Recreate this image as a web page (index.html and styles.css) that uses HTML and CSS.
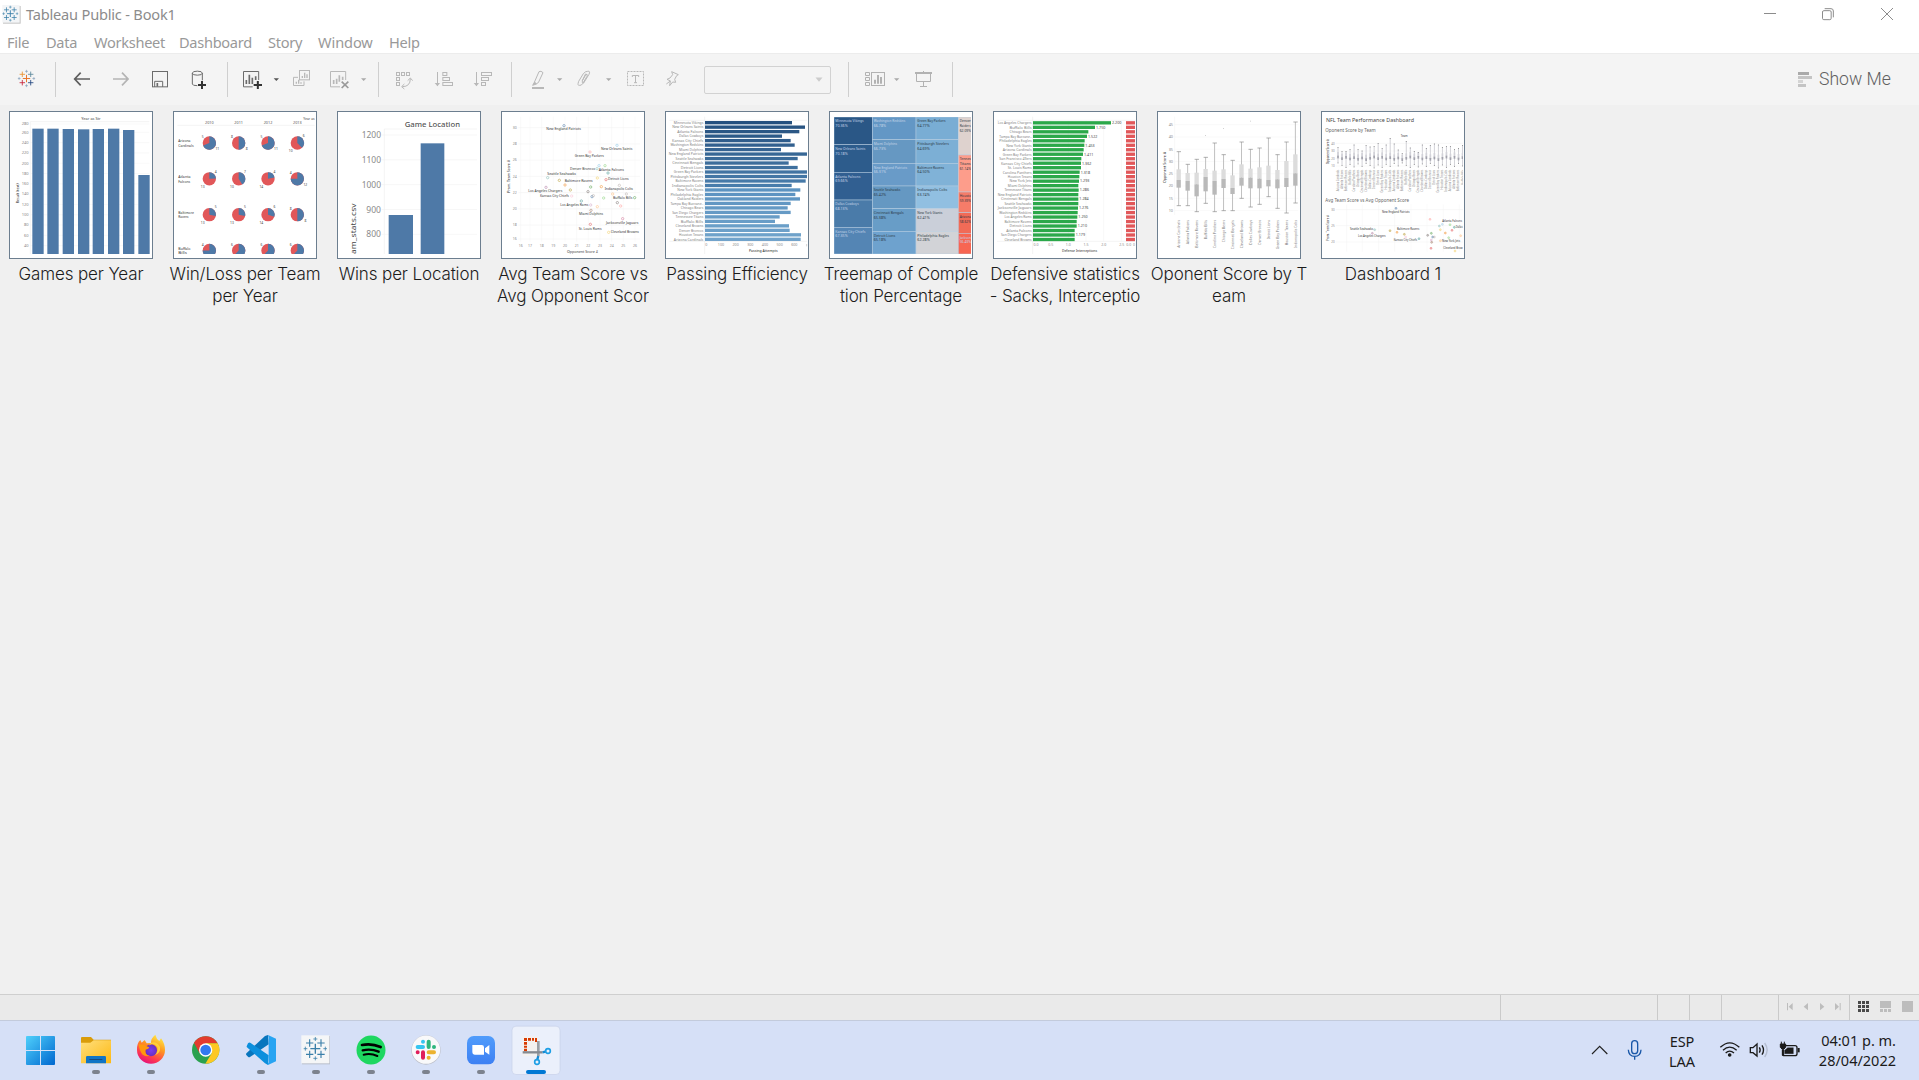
FILE: index.html
```html
<!DOCTYPE html>
<html lang="en">
<head>
<meta charset="utf-8">
<title>Tableau Public - Book1</title>
<link rel="stylesheet" href="styles.css">
</head>
<body>
<svg class="defs" width="0" height="0">
  <defs>
    <g id="marks">
      <path d="M-15 0H15M0-15V15" stroke-width="4" class="m0"/>
      <path d="M-28-17H-6M-17-28V-6" stroke-width="3.4" class="m1"/>
      <path d="M28-17H6M17-28V-6" stroke-width="3.4" class="m2"/>
      <path d="M-28 17H-6M-17 28V6" stroke-width="3.4" class="m3"/>
      <path d="M28 17H6M17 28V6" stroke-width="3.4" class="m4"/>
      <path d="M-6-29H6M0-35V-23M-6 29H6M0 35V23M-35 0H-24M-30-6V6M35 0H24M30-6V6" stroke-width="2.4" class="m5"/>
    </g>
    <linearGradient id="gWin" x1="0" y1="0" x2="1" y2="1"><stop offset="0" stop-color="#4fd0fb"/><stop offset="1" stop-color="#0067cf"/></linearGradient>
    <linearGradient id="gFold" x1="0" y1="0" x2="1" y2="1"><stop offset="0" stop-color="#ffdf7d"/><stop offset="1" stop-color="#fdb913"/></linearGradient>
    <linearGradient id="gFox" x1=".8" y1="0" x2=".3" y2="1"><stop offset="0" stop-color="#fff04a"/><stop offset=".4" stop-color="#ff9a1f"/><stop offset=".75" stop-color="#ff3b4f"/><stop offset="1" stop-color="#e4107c"/></linearGradient>
    <linearGradient id="gZoom" x1="0" y1="0" x2="0" y2="1"><stop offset="0" stop-color="#509cfb"/><stop offset="1" stop-color="#3d80f3"/></linearGradient>
    <radialGradient id="gPurple"><stop offset="0" stop-color="#7b3df0"/><stop offset="1" stop-color="#6a2fc0"/></radialGradient>
  </defs>
</svg>
<div class="window">
  <header class="titlebar">
    <svg class="app-icon" width="22" height="28" viewBox="3 0 66 84"><rect x="9" y="18" width="53" height="53" fill="#c4c4c4"/><rect x="7" y="15" width="52" height="53" fill="#f3f5f7"/><use href="#marks" class="blue" transform="translate(31 41) scale(.68)"/></svg>
    <span class="title">Tableau Public - Book1</span>
    <svg class="caption-buttons" width="169" height="28" viewBox="810 0 507 84" fill="none" stroke="#8c8c8c" stroke-width="3"><path d="M852 40.500H888"/><rect x="1027.500" y="32" width="26" height="27" rx="4"/><path d="M1034 26H1053Q1060 26 1060 33V52"/><path d="M1203 24L1239 60M1239 24L1203 60"/></svg>
  </header>
  <nav class="menubar">
    <span class="file">File</span><span class="data">Data</span><span class="worksheet">Worksheet</span><span class="dashboard">Dashboard</span><span class="story">Story</span><span class="windowm">Window</span><span>Help</span>
  </nav>
  <div class="toolbar">
    <svg width="19" height="51" viewBox="51 162 57 153" class="multi"><use href="#marks" transform="translate(79.500 235.500) scale(.74)"/></svg>
    <i class="sep"></i>
    <svg width="17" height="51" viewBox="219 162 51 153" fill="none" stroke="#5e5e5e" stroke-width="5"><path d="M270 237H225M242 218L224 237L242 256"/></svg>
    <svg width="17" height="51" viewBox="336 162 51 153" fill="none" stroke="#b4b4b4" stroke-width="5"><path d="M339 237H384M366 218L384 237L366 256"/></svg>
    <svg width="18" height="51" viewBox="453 162 54 153" fill="none" stroke="#6c6c6c" stroke-width="3"><rect x="457.500" y="214.500" width="45" height="46"/><path d="M464 261V244H488V261"/><path d="M472 249V260" stroke-width="5"/></svg>
    <svg width="17" height="51" viewBox="573 162 51 153" fill="none" stroke="#6c6c6c" stroke-width="3"><ellipse cx="592" cy="219.500" rx="15" ry="6"/><path d="M577 219V252Q577 257 592 257M607 219V241"/><path d="M594 255H618M606 243V267" stroke="#333" stroke-width="6"/></svg>
    <i class="sep"></i>
    <svg width="21" height="51" viewBox="726 162 63 153" fill="none" stroke="#6c6c6c" stroke-width="3"><path d="M776 240V214.500H730.500V260.500H758"/><path d="M739 252V240M748 252V224M757 252V233M767 240V229" stroke-width="5"/><path d="M761 255H786M773.500 243V267" stroke="#333" stroke-width="6"/></svg>
    <svg width="7" height="51" viewBox="819 162 21 153" fill="#555"><path d="M821 235H837L829 243Z"/></svg>
    <svg width="19" height="51" viewBox="876 162 57 153" fill="none" stroke="#b8b8b8" stroke-width="3"><path d="M894 232H880.500V256.500H912V244"/><rect x="898.500" y="211.500" width="30" height="28"/><path d="M889 251V245M896 251V239M903 251V247M907 234V228M914 234V218M921 234V223" stroke-width="4"/></svg>
    <svg width="20" height="51" viewBox="987 162 60 153" fill="none" stroke="#b8b8b8" stroke-width="3"><path d="M1037 240V214.500H991.500V260.500H1020"/><path d="M1001 252V240M1010 252V236M1018 245V226M1028 240V230" stroke-width="5"/><path d="M1025 245L1045 264M1045 245L1025 264" stroke="#999" stroke-width="5"/></svg>
    <svg width="7" height="51" viewBox="1080 162 21 153" fill="#aaa"><path d="M1083 235H1099L1091 243Z"/></svg>
    <i class="sep"></i>
    <svg width="18" height="51" viewBox="1185 162 54 153" fill="none" stroke="#b8b8b8" stroke-width="3"><rect x="1189.500" y="217.500" width="9" height="9"/><rect x="1204.500" y="217.500" width="9" height="9"/><rect x="1219.500" y="217.500" width="9" height="9"/><rect x="1189.500" y="232.500" width="9" height="9"/><rect x="1189.500" y="247.500" width="9" height="9"/><path d="M1207 260Q1231 260 1231 236M1223 242L1231 234L1238 242M1213 252L1205 260L1213 267"/></svg>
    <svg width="20" height="51" viewBox="1302 162 60 153" fill="none" stroke="#b8b8b8" stroke-width="3"><path d="M1312.500 216V257"/><path d="M1304 249H1320L1312.500 259Z" fill="#b8b8b8" stroke="none"/><rect x="1328.500" y="217.500" width="12" height="9"/><rect x="1328.500" y="232.500" width="20" height="9"/><rect x="1328.500" y="247.500" width="29" height="9"/></svg>
    <svg width="20" height="51" viewBox="1419 162 60 153" fill="none" stroke="#b8b8b8" stroke-width="3"><path d="M1429.500 216V257"/><path d="M1421 249H1437L1429.500 259Z" fill="#b8b8b8" stroke="none"/><rect x="1444.500" y="217.500" width="30" height="9"/><rect x="1444.500" y="232.500" width="21" height="9"/><rect x="1444.500" y="247.500" width="12" height="9"/></svg>
    <i class="sep"></i>
    <svg width="14" height="51" viewBox="93 12 42 153" fill="none" stroke="#b8b8b8" stroke-width="3"><path d="M117 65Q123 61 129 68L115 98Q110 104 103 97Z"/><path d="M103 97L98 106L109 102Z" fill="#b8b8b8"/><path d="M96 114H132" stroke-width="6"/></svg>
    <svg width="7" height="51" viewBox="168 12 21 153" fill="#aaa"><path d="M171 85H187L179 93Z"/></svg>
    <svg width="14" height="51" viewBox="231 12 42 153" fill="none" stroke="#b8b8b8" stroke-width="3"><path d="M257 71L247 92Q245 101 251 99L267 73Q272 62 263 64Q257 63 250 71L236 94Q231 108 239 106Q244 107 248 101L261 79Q264 72 258 73L247 92"/></svg>
    <svg width="7" height="51" viewBox="315 12 21 153" fill="#aaa"><path d="M318 85H334L326 93Z"/></svg>
    <svg width="19" height="51" viewBox="378 12 57 153" fill="none" stroke="#b8b8b8" stroke-width="3"><rect x="382.500" y="64.500" width="48" height="42" stroke-dasharray="6 3"/><path d="M397 81V76.500H416V81M406.500 76V98M402 98H411"/></svg>
    <svg width="15" height="51" viewBox="495 12 45 153" fill="none" stroke="#b8b8b8" stroke-width="3"><path d="M515 65L535 74L530 77L524 88L527 97L518 96L509 107L511 93L501 88L510 84L518 74Z"/><path d="M511 93L499 102"/></svg>
    <div class="combo"><svg width="8" height="6" viewBox="0 0 8 6"><path d="M.500.500H7.500L4 4.800Z" fill="#ccc"/></svg></div>
    <i class="sep"></i>
    <svg width="22" height="51" viewBox="1092 12 66 153" fill="none" stroke="#b2b2b2" stroke-width="3"><path d="M1096.500 67.500H1108.500V76.500H1096.500ZM1096.500 82.500H1108.500V91.500H1096.500ZM1096.500 97.500H1108.500V106.500H1096.500Z"/><rect x="1114.500" y="67.500" width="39" height="39"/><path d="M1125 101V89M1134 101V75M1143 101V81" stroke-width="6"/></svg>
    <svg width="7" height="51" viewBox="1179 12 21 153" fill="#aaa"><path d="M1182 85H1198L1190 93Z"/></svg>
    <svg width="19" height="51" viewBox="1242 12 57 153" fill="none" stroke="#b2b2b2" stroke-width="3"><path d="M1245 69H1296" stroke-width="6"/><path d="M1249.500 71V94.500H1291.500V71M1270.500 63V67M1270.500 95V109M1260 109.500H1281"/></svg>
    <i class="sep"></i>
    <div class="showme"><svg width="14" height="17" viewBox="0 0 14 17"><path d="M0 1H11V4H0Z" fill="#aaa"/><path d="M0 5H14V8H0ZM0 13H8V16H0Z" fill="#c4c4c4"/><path d="M0 9H5V12H0Z" fill="#d4d4d4"/></svg><span>Show Me</span></div>
  </div>
  <main class="sheets">
    <figure><svg id="c1" class="thumb" viewBox="27 18 432 444"></svg><figcaption>Games per Year</figcaption></figure>
    <figure><svg id="c2" class="thumb" viewBox="519 18 432 444"></svg><figcaption>Win/Loss per Team<br>per Year</figcaption></figure>
    <figure><svg id="c3" class="thumb" viewBox="21 18 432 444"></svg><figcaption>Wins per Location</figcaption></figure>
    <figure><svg id="c4" class="thumb" viewBox="513 18 432 444"></svg><figcaption>Avg Team Score vs<br>Avg Opponent Scor</figcaption></figure>
    <figure><svg id="c5" class="thumb" viewBox="30 18 432 444"></svg><figcaption>Passing Efficiency</figcaption></figure>
    <figure><svg id="c6" class="thumb" viewBox="522 18 432 444"></svg><figcaption>Treemap of Comple<br>tion Percentage</figcaption></figure>
    <figure><svg id="c7" class="thumb" viewBox="39 18 432 444"></svg><figcaption>Defensive statistics<br>- Sacks, Interceptio</figcaption></figure>
    <figure><svg id="c8" class="thumb" viewBox="531 18 432 444"></svg><figcaption>Oponent Score by T<br>eam</figcaption></figure>
    <figure><svg id="c9" class="thumb" viewBox="63 18 432 444"></svg><figcaption>Dashboard 1</figcaption></figure>
  </main>
  <footer class="status">
    <i></i><i></i><i></i><i></i><i></i>
    <div class="pager"><svg width="70" height="25" viewBox="897 30 210 75" fill="#bdbdbd"><path d="M921 54H924V76H921ZM938 54V76L926 65ZM984 54V76L971 65ZM1020 54V76L1033 65ZM1065 54V76L1077 65ZM1079 54H1082V76H1079Z"/></svg></div>
    <div class="views"><svg width="69" height="25" viewBox="1110 30 207 75"><path fill="#4a4a4a" d="M1134 48h9v9h-9zM1146 48h9v9h-9zM1158 48h9v9h-9zM1134 60h9v9h-9zM1146 60h9v9h-9zM1158 60h9v9h-9zM1134 72h9v9h-9zM1146 72h9v9h-9zM1158 72h9v9h-9z"/><path fill="#bdbdbd" d="M1200 48h33v21h-33zM1200 72h9v9h-9zM1212 72h9v9h-9zM1224 72h9v9h-9zM1266 48h33v33h-33z"/></svg></div>
  </footer>
</div>
<div class="taskbar">
  <div class="apps">
    <svg viewBox="39 105 165 180"><path fill="url(#gWin)" d="M80 153H120V195H78V155ZM123 153H163L165 155V195H123ZM78 198H120V240H80L78 238ZM123 198H165V238L163 240H123Z"/></svg>
    <svg viewBox="204 105 165 180"><path fill="#d99c0b" d="M243 159Q243 156 246 156H273L281 164H333V185H243Z"/><path fill="url(#gFold)" d="M243 173H271L281 166H333V235H243Z"/><path fill="#1175c5" d="M258 235V217Q258 213 262 213H314Q318 213 318 217V235Z"/><path d="M268 223.500H307" stroke="#174b7f" stroke-width="3"/><rect class="dot" x="276" y="255" width="24" height="12" rx="6"/></svg>
    <svg viewBox="369 105 165 180"><path fill="url(#gFox)" d="M453 174Q452 160 466 149Q469 162 478 168L483 160Q495 176 495 195A42 41 0 0 1 411 195Q410 175 421 165L425 173L434 165L440 175Z"/><circle cx="453" cy="196" r="18" fill="url(#gPurple)"/><path d="M416 178Q434 176 440 184L448 187Q447 192 437 194Q433 210 450 212Q437 216 428 209Q418 198 416 178Z" fill="#ff980e"/><path d="M446 182Q460 170 472 187Q475 204 463 211Q483 205 480 186Q472 168 453 173Z" fill="#ffcf3c"/><rect class="dot" x="441" y="255" width="24" height="12" rx="6"/></svg>
    <svg viewBox="534 105 165 180"><circle cx="617" cy="195" r="41" fill="#2aa14f"/><path d="M617 195L599 205L582 173A41 41 0 0 1 653 175H617Z" fill="#e33b2e"/><path d="M617 175H653A41 41 0 0 1 616 236L635 205Z" fill="#fdc823"/><circle cx="617" cy="195" r="20" fill="#fff"/><circle cx="617" cy="195" r="16" fill="#3079ee"/></svg>
    <svg viewBox="699 105 165 180"><path fill="#0875bd" d="M804 150L806 178L750 216Q747 218 744 215L739 210Q737 207 740 204L795 153Z"/><path fill="#0c8fdd" d="M740 184L744 175Q748 171 752 174L806 211L804 240L795 235L740 186Z"/><path fill="#28a4f2" d="M804 150L828 161V229L804 240Q801 239 806 232V158Z"/><rect class="dot" x="771" y="255" width="24" height="12" rx="6"/></svg>
    <svg viewBox="-36 105 165 180"><rect x="6" y="153" width="84" height="85" fill="#b9bfcc"/><rect x="4" y="151" width="84" height="84" fill="#f5f6f7"/><use href="#marks" class="blue" transform="translate(46 191)"/><rect class="dot" x="36" y="255" width="24" height="12" rx="6"/></svg>
    <svg viewBox="129 105 165 180"><circle cx="213" cy="195" r="43.500" fill="#1ed760"/><g fill="none" stroke="#000" stroke-linecap="round"><path d="M186 180Q215 174 242 186" stroke-width="8"/><path d="M188 196Q213 190 236 200" stroke-width="7"/><path d="M191 209Q213 204 232 213" stroke-width="6"/></g><rect class="dot" x="201" y="255" width="24" height="12" rx="6"/></svg>
    <svg viewBox="294 105 165 180"><circle cx="378" cy="195" r="44" fill="#bdc0ca"/><circle cx="378" cy="194" r="42.500" fill="#f9f9fa"/><g stroke-width="12" stroke-linecap="round"><path d="M353 186H369M369 170V170" stroke="#36c5f0"/><path d="M386 170V186M402 186V186" stroke="#2eb67d"/><path d="M386 202H402M386 218V218" stroke="#ecb22e"/><path d="M369 202V218M353 202V202" stroke="#e01e5a"/></g><rect class="dot" x="366" y="255" width="24" height="12" rx="6"/></svg>
    <svg viewBox="459 105 165 180"><rect x="501" y="153" width="84" height="85" rx="20" fill="url(#gZoom)"/><path d="M517 180H545Q552 180 552 187V209H524Q517 209 517 202ZM555 190L568 180V209L555 200Z" fill="#fff"/><rect class="dot" x="531" y="255" width="24" height="12" rx="6"/></svg>
    <svg viewBox="624 105 165 180"><rect x="636" y="123.500" width="144" height="145" rx="12" fill="#ebf0fb" stroke="#c7d0e8" stroke-width="2"/><rect x="667" y="154" width="48" height="60" fill="#f3f1f0"/><path fill="#d83b01" d="M672 159h9v9h-9zM684 159h9v8h-9zM696 159h6v8h-6zM705 159h6v12h-6zM672 171h9v8h-9zM672 182h9v6h-9zM672 191h9v8h-9z"/><path d="M715 168V213" stroke="#9a9fa6" stroke-width="8"/><path d="M668 202H728" stroke="#858a91" stroke-width="7"/><path d="M728 202L738 199M715 213L712 223" stroke="#168bd2" stroke-width="7"/><g fill="none" stroke="#1e9fe5" stroke-width="5"><circle cx="744" cy="198" r="7"/><circle cx="711" cy="231" r="7"/></g><rect x="678" y="255" width="60" height="12" rx="6" fill="#0078d4"/></svg>
  </div>
  <div class="tray">
    <svg width="70" height="60" viewBox="310 105 210 180" fill="none"><path d="M334 207L357 184L380 207" stroke="#222" stroke-width="3.500"/><g stroke="#1957a8" stroke-width="4"><rect x="453" y="167" width="18" height="39" rx="9"/><path d="M443 194Q444 214 462 214T481 194M462 214V224"/></g></svg>
    <div class="lang">ESP<br>LAA</div>
    <svg class="net" width="100" height="60" viewBox="700 105 300 180" fill="none" stroke="#1b1b1b"><g stroke-width="4"><path d="M719 187Q747 160 776 187M727 196Q747 177 768 196M735 204Q747 193 760 204"/><circle cx="747" cy="210" r="3.500" fill="#1b1b1b"/><path d="M809 188H817L829 177V213L817 203H809Z"/><path d="M836 187Q841 195 836 203M844 181Q853 195 844 209"/><path d="M852 174Q867 195 852 216" stroke="#b4bdcf"/></g><path d="M911 182H943Q949 182 949 188V206Q949 212 943 212H911Q906 212 906 206V195" stroke-width="4"/><path d="M921 188H938V206H912V196Z" fill="#1b1b1b"/><path d="M954 189V202" stroke-width="6"/><path d="M899 177H915V187L909 193V211H905V193L899 187ZM902 170V178M911 170V178" fill="#1b1b1b" stroke-width="3"/></svg>
    <div class="clock">04:01 p. m.<br>28/04/2022</div>
  </div>
</div>
<script src="charts.js"></script>
</body>
</html>
```
FILE: styles.css
```css
* { box-sizing: border-box; }
body { margin: 0; width: 1919px; height: 1080px; display: flex; flex-direction: column; overflow: hidden; background: #f0f0f0; font-family: "Open Sans", "Noto Sans", sans-serif; }
svg { display: block; flex: none; }
.defs { position: absolute; }
.window { flex: 1; display: flex; flex-direction: column; min-height: 0; }
.titlebar { height: 28px; background: #fff; display: flex; align-items: center; padding-left: 1px; }
.title { margin-left: 3px; font: 14.6px/28px "Noto Sans", sans-serif; letter-spacing: -.2px; color: #8c8c8c; }
.caption-buttons { margin-left: auto; }
.menubar { height: 26px; background: #fff; display: flex; padding-left: 7px; font: 14.6px/29px "Noto Sans", sans-serif; letter-spacing: -.3px; color: #999; border-bottom: 1px solid #ececec; }
.file { width: 39px; } .data { width: 48px; } .worksheet { width: 85px; } .dashboard { width: 89px; } .story { width: 50px; } .windowm { width: 71px; letter-spacing: -.1px; }
.toolbar { height: 51px; background: #f4f4f4; display: grid; align-items: center; padding-left: 17px; grid-template-columns: 38px 18px 39px 39px 40px 36px 15px 31px 19px 37px 31px 18px 17px 39px 39px 38px 20px 25px 21px 28px 21px 39px 39px 144px 16px 29px 21px 38px 846px auto; }
.sep { width: 1px; height: 35px; background: #cfcfcf; }
.toolbar .combo { width: 127px; height: 28px; border: 1px solid #d2d2d2; border-radius: 2px; display: flex; align-items: center; justify-content: flex-end; padding-right: 7px; }
.multi { --m0: #e8762d; --m1: #eb912c; --m2: #59879b; --m3: #c72037; --m4: #1f447e; --m5: #7b98b5; }
.m0 { stroke: var(--m0, #3a7fa9); }
.m1 { stroke: var(--m1, #3a7fa9); }
.m2 { stroke: var(--m2, #3a7fa9); }
.m3 { stroke: var(--m3, #3a7fa9); }
.m4 { stroke: var(--m4, #3a7fa9); }
.m5 { stroke: var(--m5, #3a7fa9); }
.showme { display: flex; align-items: center; gap: 7px; font: 300 17.600px/51px Roboto, sans-serif; color: #606060; white-space: nowrap; }
.sheets { flex: 1; min-height: 0; padding-top: 6px; display: grid; grid-template-columns: repeat(9, 164px); align-content: start; }
figure { margin: 0; display: flex; flex-direction: column; align-items: center; padding-right: 2px; }
.thumb { width: 144px; height: 148px; background: #fff; outline: 1px solid #6c7e8f; outline-offset: -1px; font-family: "Noto Sans", sans-serif; }
figcaption { width: 164px; margin-top: 4px; text-align: center; font: 300 17px/22px Inter, sans-serif; letter-spacing: -.13px; color: #1c1c1c; white-space: nowrap; }
.status { height: 26px; background: #eaeaea; border-top: 1px solid #cfcfcf; display: grid; grid-template-columns: 1501px 157px 32px 32px 57px 71px 69px; }
.status > i, .pager { border-right: 1px solid #cacaca; }
.taskbar { height: 60px; background: #d6e0f7; border-top: 1px solid #c3cbdc; display: flex; justify-content: space-between; }
.taskbar svg { margin-top: -1px; }
.apps { display: flex; padding-left: 13px; }
.apps svg { width: 55px; height: 60px; }
.dot { fill: #7c828e; }
.tray { display: flex; color: #1b1b1b; font: 14.500px/20px "Noto Sans", sans-serif; padding-right: 23px; }
.lang { width: 62px; margin-left: -3px; padding-top: 10px; text-align: center; letter-spacing: -.1px; }
.clock { width: 84px; padding-top: 9px; margin-left: -2px; text-align: right; white-space: nowrap; letter-spacing: 0; }
.net { margin-left: 1px; }
```
FILE: charts.js
```js
const BLUE = '#4e79a7', RED = '#e15759';
const rect = (x, y, w, h, f) => `<rect x="${x}" y="${y}" width="${w}" height="${h}" fill="${f}"/>`;
const line = (x1, y1, x2, y2, c = '#e8e8e8', w = 1.5) => `<path d="M${x1} ${y1}L${x2} ${y2}" stroke="${c}" stroke-width="${w}"/>`;
const text = (x, y, s, len, size = 11, c = '#777', anchor = 'start', extra = '') =>
  `<text x="${x}" y="${y}" font-size="${size}" fill="${c}" text-anchor="${anchor}" ${len ? `textLength="${len}" lengthAdjust="spacingAndGlyphs"` : ''} ${extra}>${s}</text>`;
const vtext = (x, y, s, len, size, c) => text(x, y, s, len, size, c, 'start', `transform="rotate(-90 ${x} ${y})"`);
const put = (id, s) => { document.getElementById(id).innerHTML = s; };
const mix = (a, b, t) => `rgb(${a.map((v, i) => Math.round(v + (b[i] - v) * t)).join()})`;

// Games per Year
let s = text(244, 45, 'Year as Str', 58, 12, '#444') + line(91, 50, 448, 50) + line(91, 50, 91, 447);
[280, 260, 240, 220, 200, 180, 160, 140, 120, 100, 80, 60, 40].forEach((v, i) => {
  const y = i ? 82 + (i - 1) * 30.9 : 57;
  s += line(91, y, 448, y, '#f3f3f3') + text(86, y + 4, v, v > 99 ? 21 : 14, 12, '#888', 'end');
});
[[97, 71], [142, 71], [188, 72], [234, 73], [278, 72], [324, 71], [369, 75], [415, 210]].forEach(([x, y]) => { s += rect(x, y, 34, 447 - y, BLUE); });
s += vtext(57, 295, 'Result (text)', 60, 12, '#333');
put('c1', s);

// Win/Loss per Team per Year: blue share, first label, second label
s = text(910, 44, 'Year as', 34, 11, '#444') + line(532, 61, 944, 61);
['2010', '2011', '2012', '2013'].forEach((v, i) => { s += text(628 + i * 88, 57, v, 26, 11, '#555', 'middle'); });
const names = [['Arizona', 'Cardinals'], ['Atlanta', 'Falcons'], ['Baltimore', 'Ravens'], ['Buffalo', 'Bills']];
const pies = [
  [[.69, 5, 11], [.5, 8, 8], [.69, 5, 11], [.38, 10, 6]],
  [[.24, 13, 4], [.41, 10, 7], [.22, 14, 4], [.75, 4, 12]],
  [[.28, 13, 5], [.28, 13, 5], [.3, 14, 6], [.5, 8, 8]],
  [[.75, 4, 12], [.62, 6, 10], [.62, 6, 10], [.62, 6, 10]]
];
s += '<clipPath id="k2"><rect x="520" y="18" width="430" height="429"/></clipPath><g clip-path="url(#k2)">';
pies.forEach((row, j) => {
  const cy = 114 + j * 107.500;
  s += text(535, cy - 3, names[j][0], names[j][0].length * 5.200, 11, '#333') + text(535, cy + 11, names[j][1], names[j][1].length * 5.100, 11, '#333');
  row.forEach(([p, a, b], i) => {
    const cx = 628 + i * 88, r = 20, t = p * 2 * Math.PI;
    s += `<circle cx="${cx}" cy="${cy}" r="${r}" fill="${RED}"/><path d="M${cx} ${cy}V${cy - r}A${r} ${r} 0 ${p > .5 ? 1 : 0} 1 ${cx + r * Math.sin(t)} ${cy - r * Math.cos(t)}Z" fill="${BLUE}"/>`;
    const big = p >= .5;
    s += text(cx - 20, big ? cy - 14 : cy + 27, a, 0, 10, '#444', 'middle');
    if (!big || j < 3) s += text(cx + (big ? 24 : 19), big ? cy + 22 : cy - 19, b, 0, 10, '#444', 'middle');
  });
});
put('c2', s + '</g>');

// Wins per Location
s = text(224, 65, 'Game Location', 166, 23, '#555', 'start', 'font-weight="500"') + line(163, 72, 163, 447) + line(163, 72, 441, 72);
[1200, 1100, 1000, 900, 800].forEach((v, i) => {
  const y = 90 + i * 74.500;
  s += line(155, y, 441, y, '#eee') + text(153, y + 9, v, v > 999 ? 58 : 44, 25, '#8b8b8b', 'end');
});
s += rect(176, 330, 73, 117, BLUE) + rect(272, 115, 71, 332, BLUE) + vtext(77, 447, 'am_stats.csv', 152, 21, '#444');
put('c3', s);

// Avg Team Score vs Avg Opponent Score
s = '';
[30, 28, 26, 24, 22, 20, 18, 16].forEach((v, i) => { const y = i === 7 ? 402 : 68 + i * 48.700; s += line(565, y, 930, y, '#f1f1f1') + text(560, y + 4, v, 12, 11, '#888', 'end'); });
[16, 17, 18, 19, 20, 21, 22, 23, 24, 25, 26].forEach((v, i) => { const x = i ? 600 + (i - 1) * 35 : 572; s += line(x, 35, x, 410, '#f4f4f4') + text(x, 425, v, 12, 11, '#888', 'middle'); });
[['New England Patriots', 649, 76, 104], ['New Orleans Saints', 813, 136, 94], ['Green Bay Packers', 734, 156, 88], ['Denver Broncos', 720, 195, 75], ['Atlanta Falcons', 806, 197, 76], ['Seattle Seahawks', 652, 210, 86], ['Baltimore Ravens', 704, 232, 84], ['Detroit Lions', 834, 226, 62], ['Los Angeles Chargers', 595, 262, 102], ['Indianapolis Colts', 824, 256, 85], ['Kansas City Chiefs', 630, 277, 87], ['Buffalo Bills', 849, 282, 58], ['Los Angeles Rams', 691, 303, 84], ['Miami Dolphins', 747, 331, 72], ['Jacksonville Jaguars', 828, 357, 97], ['St. Louis Rams', 746, 374, 69], ['Cleveland Browns', 842, 385, 85]].forEach(([n, x, y, l]) => { s += text(x, y, n, l, 11, '#333'); });
[[702, 62, '#4e79a7'], [861, 121, '#8cc7e8'], [780, 141, '#ff9d9a'], [807, 182, '#8cc7e8'], [825, 182, '#8cd17d'], [801, 191, '#86bcb6'], [834, 204, '#499894'], [653, 218, '#86bcb6'], [688, 226, '#b6992d'], [802, 219, '#f1ce63'], [828, 224, '#e15759'], [705, 240, '#f28e2b'], [648, 247, '#b07aa1'], [721, 255, '#b6992d'], [782, 246, '#59a14f'], [814, 245, '#f28e2b'], [868, 241, '#bab0ac'], [774, 260, '#79706e'], [725, 273, '#fabfd2'], [786, 275, '#4e79a7'], [790, 272, '#bab0ac'], [821, 279, '#8cd17d'], [848, 267, '#ffbe7d'], [889, 267, '#bab0ac'], [914, 278, '#59a14f'], [754, 288, '#499894'], [862, 293, '#79706e'], [782, 300, '#d4a6c8'], [802, 305, '#ffbe7d'], [872, 303, '#ff9d9a'], [783, 316, '#9d7660'], [878, 341, '#d37295'], [781, 358, '#e15759'], [836, 382, '#f1ce63']].forEach(([x, y, c]) => { s += `<circle cx="${x}" cy="${y}" r="3.500" fill="none" stroke="${c}" stroke-width="2" opacity=".8"/>`; });
s += text(711, 443, 'Opponent Score  #', 93, 11, '#333') + vtext(541, 263, 'Prom. Team Score #', 98, 11, '#333');
put('c4', s);

// Passing Efficiency
const teams = ['Minnesota Vikings', 'New Orleans Saints', 'Atlanta Falcons', 'Dallas Cowboys', 'Kansas City Chiefs', 'Washington Redskins', 'Miami Dolphins', 'New England Patriots', 'Seattle Seahawks', 'Cincinnati Bengals', 'Detroit Lions', 'Green Bay Packers', 'Pittsburgh Steelers', 'Baltimore Ravens', 'Indianapolis Colts', 'New York Giants', 'Philadelphia Eagles', 'Oakland Raiders', 'Tampa Bay Buccane..', 'Chicago Bears', 'San Diego Chargers', 'Tennessee Titans', 'Buffalo Bills', 'Cleveland Browns', 'Denver Broncos', 'Houston Texans', 'Arizona Cardinals'];
const ends = [411, 450, 433, 381, 407, 419, 378, 456, 428, 401, 428, 456, 456, 452, 410, 436, 421, 435, 407, 398, 407, 374, 360, 402, 404, 438, 437];
s = line(149, 35, 149, 447) + line(43, 46, 456, 46) + line(43, 409, 456, 409);
teams.forEach((n, i) => {
  const y = 53 + i * 13.460, t = i / 26;
  s += text(145, y + 4, n, n.length * 5.200, 11, '#808080', 'end') + rect(150, y - 5, ends[i] - 150, 10, t < .55 ? mix([38, 81, 127], [73, 125, 172], t / .55) : mix([91, 146, 192], [113, 163, 203], (t - .55) / .45));
});
['0', '100', '200', '300', '400', '500', '600'].forEach((v, i) => { s += text(154 + i * 44, 424, v, 0, 11, '#888', 'middle'); });
s += line(455, 417, 455, 424, '#aaa') + text(282, 442, 'Passing Attempts', 86, 11, '#222');
put('c5', s);

// Treemap of Completion Percentage
s = '<clipPath id="k6"><rect x="537" y="36" width="411" height="411"/></clipPath><g clip-path="url(#k6)">';
[[537, 36, 115, 83, '#2a5786', 'Minnesota Vikings', '70.36%'], [537, 119, 115, 83, '#2d5c8c', 'New Orleans Saints', '70.18%'], [537, 202, 115, 83, '#315f91', 'Atlanta Falcons', '69.66%'], [537, 285, 115, 82, '#4a7ba9', 'Dallas Cowboys', '68.13%'], [537, 367, 115, 80, '#5485b4', 'Kansas City Chiefs', '67.35%'],
[652, 36, 131, 68, '#6397c5', 'Washington Redskins', '66.78%'], [652, 104, 131, 71, '#6698c2', 'Miami Dolphins', '66.73%'], [652, 175, 131, 68, '#699bc8', 'New England Patriots', '66.31%'], [652, 243, 131, 68, '#6598c2', 'Seattle Seahawks', '65.42%'], [652, 311, 131, 68, '#689dc7', 'Cincinnati Bengals', '65.38%'], [652, 379, 131, 68, '#6ea2ce', 'Detroit Lions', '65.18%'],
[783, 36, 127, 68, '#79add4', 'Green Bay Packers', '64.77%'], [783, 104, 127, 71, '#7cafd5', 'Pittsburgh Steelers', '64.69%'], [783, 175, 127, 68, '#80b2d7', 'Baltimore Ravens', '64.50%'], [783, 243, 127, 68, '#91bfe1', 'Indianapolis Colts', '63.74%'], [783, 311, 127, 68, '#cacfd9', 'New York Giants', '62.41%'], [783, 379, 127, 68, '#d2d3d7', 'Philadelphia Eagles', '62.28%'],
[910, 36, 60, 114, '#ded2ce', 'Denver', '62.09%', 'Raiders'], [910, 150, 60, 111, '#fd9d8b', 'Tennes', '61.14%', 'Titans'], [910, 261, 60, 62, '#f57c69', 'Housto', '59.39%'], [910, 323, 60, 62, '#f16b57', 'Arizona', '58.62%'], [910, 385, 60, 62, '#f76652', 'Jackson', '56.43%']].forEach(([x, y, w, h, c, n, p, n2], i) => {
  const col = i < 8 || i === 21 ? '#c6d6e8' : '#2c3844', k = x === 910 ? 34 : n.length * 5;
  s += `<rect x="${x}" y="${y}" width="${w}" height="${h}" fill="${c}" stroke="#b5cce0" stroke-width="1.500"/>` + text(x + 4, y + 16, n, k, 11, col);
  if (n2) s += text(x + 4, y + 30, n2, 33, 11, col);
  s += text(x + 4, y + (n2 ? 44 : 30), p, x === 910 ? 34 : 37, 11, col);
});
put('c6', s + '</g>');

// Defensive statistics
const defs = [['Los Angeles Chargers', 393, '2.200'], ['Buffalo Bills', 345, '1.750'], ['Chicago Bears', 325], ['Tampa Bay Buccane..', 321, '1.522'], ['Philadelphia Eagles', 314], ['New York Giants', 313, '1.453'], ['Arizona Cardinals', 311], ['Green Bay Packers', 309, '1.411'], ['San Francisco 49ers', 304], ['Kansas City Chiefs', 303, '1.362'], ['St. Louis Rams', 303], ['Carolina Panthers', 299, '1.318'], ['Houston Texans', 298], ['New York Jets', 297, '1.293'], ['Miami Dolphins', 295], ['Tennessee Titans', 296, '1.286'], ['New England Patriots', 295], ['Cincinnati Bengals', 295, '1.284'], ['Seattle Seahawks', 295], ['Jacksonville Jaguars', 294, '1.276'], ['Washington Redskins', 293], ['Los Angeles Rams', 292, '1.250'], ['Baltimore Ravens', 290], ['Detroit Lions', 290, '1.210'], ['Atlanta Falcons', 284], ['San Diego Chargers', 284, '1.179'], ['Cleveland Browns', 284]];
s = line(158, 35, 158, 447) + line(51, 46, 465, 46) + line(51, 409, 465, 409);
[212, 265, 318, 371, 424].forEach(x => { s += line(x, 46, x, 409, '#f1f1f1'); });
defs.forEach(([n, e, v], i) => {
  const y = 53.500 + i * 13.460;
  s += text(155, y + 4, n, n.length * 5.100, 11, '#808080', 'end') + rect(159, y - 5, e - 159, 10, '#2ba84a') + rect(438, y - 5, 27, 10, RED);
  if (v) s += text(e + 3, y + 4, v, 28, 11, '#444');
});
['0.0', '0.5', '1.0', '1.5', '2.0', '2.5', '0.0'].forEach((v, i) => { s += text([168, 212, 265, 318, 371, 425, 446][i], 423, v, 15, 11, '#888', 'middle'); });
s += text(459, 423, '0', 0, 10, '#888') + text(246, 442, 'Defense Interceptions', 105, 11, '#222');
put('c7', s);

// Oponent Score by Team: top whisker, box top, median, box bottom, low whisker
const box = (x, a, b, m, c, d, w = 13) => line(x, a, x, d, '#b5b5b5', 2.500) + rect(x - w / 2, b, w, m - b, '#dcdcdc') + rect(x - w / 2, m, w, c - m, '#b9b9b9') + line(x - 6, a, x + 7, a, '#888', 2) + line(x - 6, d, x + 7, d, '#888', 2);
s = line(584, 35, 584, 330, '#f0f0f0');
[45, 40, 35, 30, 25, 20, 15, 10].forEach((v, i) => { s += line(584, 59 + i * 36.800, 955, 59 + i * 36.800, '#f4f4f4') + text(579, 63 + i * 36.800, v, 13, 11, '#888', 'end'); });
const b8 = [[140, 193, 225, 248, 302], [178, 204, 228, 257, 302], [163, 203, 238, 274, 320], [157, 192, 216, 259, 295], [114, 197, 228, 269, 320], [149, 193, 222, 249, 317], [166, 211, 249, 267, 317], [111, 178, 218, 242, 280], [133, 191, 218, 250, 306], [129, 187, 221, 250, 298], [99, 182, 225, 244, 275], [149, 195, 223, 250, 310], [111, 168, 219, 246, 324], [51, 148, 205, 242, 294]];
const n8 = ['Arizona Cardinals', 'Atlanta Falcons', 'Baltimore Ravens', 'Buffalo Bills', 'Carolina Panthers', 'Chicago Bears', 'Cincinnati Bengals', 'Cleveland Browns', 'Dallas Cowboys', 'Denver Broncos', 'Detroit Lions', 'Green Bay Packers', 'Houston Texans', 'Indianapolis Colts'];
const l8 = [83, 73, 83, 58, 84, 67, 88, 85, 74, 74, 58, 88, 76, 84];
b8.forEach((v, i) => {
  const x = 596 + i * 26.930;
  s += box(x, ...v) + vtext(x + 4, 345 + l8[i], n8[i], l8[i], 11, '#808080');
});
[[677, 91], [731, 70], [811, 48]].forEach(([x, y]) => { s += rect(x - 1, y - 1, 2, 3, '#bbb'); });
s += vtext(558, 234, 'Opponent Score #', 93, 11, '#222');
put('c8', s);

// Dashboard 1
s = text(78, 51, 'NFL Team Performance Dashboard', 264, 16, '#444') + text(76, 80, 'Oponent Score by Team', 151, 14, '#666') + text(302, 97, 'Team', 21, 9, '#333') + text(76, 290, 'Avg Team Score vs Avg Opponent Score', 251, 14, '#666');
s += '<clipPath id="k9"><rect x="64" y="18" width="425" height="429"/></clipPath><g clip-path="url(#k9)">';
[['40', 115], ['30', 138], ['20', 160], ['10', 183], ['30', 314], ['25', 362], ['20', 411]].forEach(([v, y]) => { s += line(107, y, 489, y, '#f0f0f0') + text(104, y + 4, v, 10, 9, '#888', 'end'); });
[140, 187, 236, 284, 333, 381, 430, 478].forEach(x => { s += line(x, 298, x, 440, '#f4f4f4'); });
const tops = [127, 139, 138, 133, 119, 133, 137, 121, 125, 124, 115, 130, 119, 99, 116, 134, 145, 108, 128, 138, 141, 119, 129, 120, 116, 119, 127, 124, 124, 133, 129, 120];
tops.forEach((t, i) => {
  const x = 114 + i * 12.050, j = i % 14;
  s += line(x, t, x, 174 + (i * 7) % 16, '#b4b4bd', 1.800) + rect(x - 2.500, 141 + (i * 5) % 9, 5, 14, '#d2d2d8') + rect(x - 2.500, 152 + (i * 5) % 9, 5, 8, '#a3a3ad');
  s += rect(x - 1.500, t, 3, 2, '#777') + rect(x - 1.500, 173 + (i * 7) % 16, 3, 2, '#777');
  s += vtext(x + 3, 194 + l8[j] * .78, n8[j], l8[j] * .78, 8, '#888');
});
s += vtext(88, 178, 'Opponent Score #', 76, 9, '#222') + vtext(88, 407, 'Prom. Team Score #', 76, 9, '#222');
[['New England Patriots', 246, 323, 83], ['Seattle Seahawks', 150, 376, 69], ['Los Angeles Chargers', 174, 397, 83], ['Baltimore Ravens', 291, 376, 67], ['Kansas City Chiefs', 281, 408, 70], ['Atlanta Falcons', 427, 352, 59], ['Dallas', 467, 370, 21], ['New York Jets', 426, 411, 54], ['Cleveland Brow', 430, 432, 58]].forEach(([n, x, y, l]) => { s += text(x, y, n, l, 9, '#333'); });
[[288, 310, '#4e79a7'], [390, 343, '#ff9d9a'], [224, 374, '#86bcb6'], [217, 385, '#b07aa1'], [270, 377, '#b6992d'], [291, 382, '#f28e2b'], [313, 388, '#b6992d'], [317, 396, '#fabfd2'], [357, 401, '#499894'], [383, 391, '#79706e'], [394, 385, '#59a14f'], [398, 396, '#4e79a7'], [403, 396, '#bab0ac'], [418, 363, '#86bcb6'], [427, 358, '#a0cbe8'], [450, 359, '#8cd17d'], [463, 367, '#499894'], [421, 374, '#f1ce63'], [456, 376, '#e15759'], [436, 384, '#f28e2b'], [446, 398, '#8cd17d'], [482, 392, '#ffbe7d'], [421, 407, '#ffbe7d'], [394, 405, '#d4a6c8'], [395, 412, '#9d7660'], [393, 430, '#e15759'], [465, 438, '#f1ce63']].forEach(([x, y, c]) => { s += `<circle cx="${x}" cy="${y}" r="3" fill="${c}" fill-opacity=".4" stroke="${c}" stroke-width="1.500" stroke-opacity=".7"/>`; });
put('c9', s + '</g>');
```
